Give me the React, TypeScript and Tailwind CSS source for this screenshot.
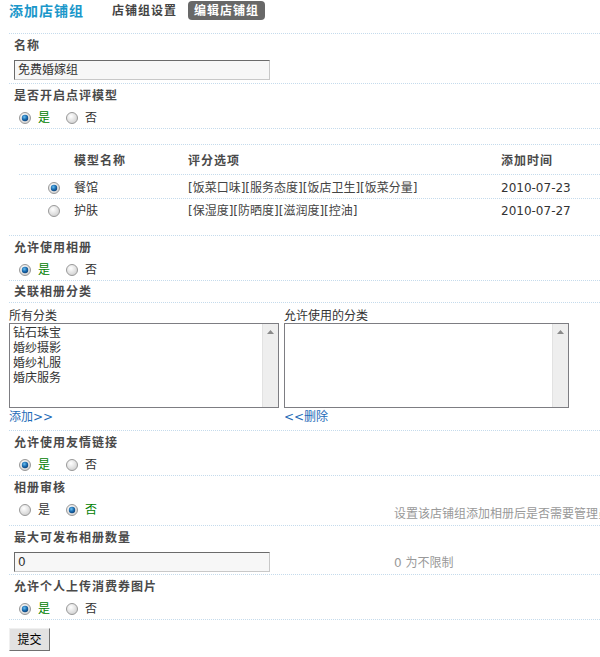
import React from "react";

const Radio = ({ checked }: { checked: boolean }) => (
  <svg width="12" height="12" viewBox="0 0 12 12" className="shrink-0 block">
    <defs>
      <radialGradient id="rg" cx="40%" cy="35%" r="70%">
        <stop offset="0%" stopColor="#ffffff" />
        <stop offset="100%" stopColor="#cfcfcf" />
      </radialGradient>
      <radialGradient id="rb" cx="40%" cy="35%" r="70%">
        <stop offset="0%" stopColor="#6cc0f0" />
        <stop offset="55%" stopColor="#1a6cb0" />
        <stop offset="100%" stopColor="#0d3f75" />
      </radialGradient>
    </defs>
    <circle cx="6" cy="6" r="5.5" fill="url(#rg)" stroke="#999999" strokeWidth="1" />
    {checked && <circle cx="6" cy="6" r="3.2" fill="url(#rb)" />}
  </svg>
);

const YesNo = ({ yes }: { yes: boolean }) => (
  <div className="flex items-center pl-[10px]">
    <Radio checked={yes} />
    <span className={"ml-[7px] " + (yes ? "text-[#008000]" : "text-[#333]")}>是</span>
    <span className="ml-[16px]">
      <Radio checked={!yes} />
    </span>
    <span className={"ml-[7px] " + (!yes ? "text-[#008000]" : "text-[#333]")}>否</span>
  </div>
);

const Label = ({ children, h = "h-[23px]" }: { children: React.ReactNode; h?: string }) => (
  <div className={h + " flex items-center pl-[5px] font-bold tracking-[1px] text-[#4a4a4a]"}>{children}</div>
);

const Section = ({ children, className = "" }: { children: React.ReactNode; className?: string }) => (
  <div className={"border-t border-dotted border-[#c5dbec] " + className}>{children}</div>
);

const TextInput = ({ value }: { value: string }) => (
  <div className="w-[256px] h-[20px] bg-[#f7f7f7] border border-t-[#6b6b6b] border-l-[#6b6b6b] border-r-[#c8c8c8] border-b-[#c8c8c8] flex items-center pl-[3px] text-[#333]">
    {value}
  </div>
);

const ListBox = ({ items, w }: { items: string[]; w: string }) => (
  <div className={w + " h-[85px] border border-[#7d7d82] bg-white flex"}>
    <div className="flex-1 pt-[2px] pl-[3px] leading-[15px] text-[#333]">
      {items.map((it) => (
        <div key={it}>{it}</div>
      ))}
    </div>
    <div className="w-[16px] h-full bg-[#eeeeee] border-l border-[#e2e2e2] flex justify-center pt-[6px]">
      <svg width="7" height="4" viewBox="0 0 7 4">
        <polygon points="3.5,0 7,4 0,4" fill="#8a8a8a" />
      </svg>
    </div>
  </div>
);

export default function App() {
  return (
    <div className="w-[600px] h-[657px] overflow-hidden bg-white font-['DejaVu_Sans','Noto_Sans_CJK_SC',sans-serif] text-[12px] leading-[16px] text-[#333]">
      <div className="pl-[9px] w-[760px]">
        {/* header */}
        <div className="h-[33px]">
          <div className="h-[22px] flex items-center">
            <span className="text-[14px] font-bold tracking-[1px] text-[#1b97ca]">添加店铺组</span>
            <span className="ml-[28px] font-bold tracking-[1px] text-[#444]">店铺组设置</span>
            <span className="ml-[11px] h-[19px] mt-[-1px] px-[6px] rounded-[4px] bg-[#686868] text-white font-bold tracking-[1px] flex items-center">
              编辑店铺组
            </span>
          </div>
        </div>

        {/* 名称 */}
        <Section className="pb-[3px]">
          <Label>名称</Label>
          <div className="mt-[3px] pl-[5px]">
            <TextInput value="免费婚嫁组" />
          </div>
        </Section>

        {/* 是否开启点评模型 */}
        <Section>
          <Label>是否开启点评模型</Label>
          <div className="h-[21px] flex items-center">
            <YesNo yes={true} />
          </div>
        </Section>

        {/* table */}
        <Section className="pt-[15px] pb-[12px]">
          <div className="ml-[10px] border-t border-dotted border-[#c5dbec]">
            <div className="h-[29px] pt-[3px] grid grid-cols-[55px_114px_313px_1fr] items-center font-bold tracking-[1px] text-[#4a4a4a]">
              <div />
              <div>模型名称</div>
              <div>评分选项</div>
              <div>添加时间</div>
            </div>
            <div className="h-[24px] pt-[2px] border-t border-dotted border-[#c5dbec] grid grid-cols-[55px_114px_313px_1fr] items-center">
              <div className="pl-[29px]">
                <Radio checked={true} />
              </div>
              <div>餐馆</div>
              <div className="text-[#444]">[饭菜口味][服务态度][饭店卫生][饭菜分量]</div>
              <div>2010-07-23</div>
            </div>
            <div className="h-[25px] border-t border-dotted border-[#c5dbec] grid grid-cols-[55px_114px_313px_1fr] items-center">
              <div className="pl-[29px]">
                <Radio checked={false} />
              </div>
              <div>护肤</div>
              <div className="text-[#444]">[保湿度][防晒度][滋润度][控油]</div>
              <div>2010-07-27</div>
            </div>
          </div>
        </Section>

        {/* 允许使用相册 */}
        <Section>
          <Label>允许使用相册</Label>
          <div className="h-[21px] flex items-center">
            <YesNo yes={true} />
          </div>
        </Section>

        {/* 关联相册分类 */}
        <Section>
          <Label h="h-[21px]">关联相册分类</Label>
        </Section>

        {/* album lists */}
        <Section className="pb-[5px]">
          <div className="flex gap-[5px]">
            <div className="flex flex-col">
              <div className="h-[20px] pt-[5px] flex items-center">所有分类</div>
              <ListBox w="w-[270px]" items={["钻石珠宝", "婚纱摄影", "婚纱礼服", "婚庆服务"]} />
              <div className="h-[17px] flex items-center text-[#1e6bb8]">添加&gt;&gt;</div>
            </div>
            <div className="flex flex-col">
              <div className="h-[20px] pt-[5px] flex items-center">允许使用的分类</div>
              <ListBox w="w-[285px]" items={[]} />
              <div className="h-[17px] flex items-center text-[#1e6bb8]">&lt;&lt;删除</div>
            </div>
          </div>
        </Section>

        {/* 友情链接 */}
        <Section>
          <Label>允许使用友情链接</Label>
          <div className="h-[21px] flex items-center">
            <YesNo yes={true} />
          </div>
        </Section>

        {/* 相册审核 */}
        <Section>
          <Label>相册审核</Label>
          <div className="h-[26px] flex">
            <div className="w-[385px] h-[22px] flex items-center">
              <YesNo yes={false} />
            </div>
            <div className="self-end mb-[3px] text-[#999] whitespace-nowrap">设置该店铺组添加相册后是否需要管理员审核</div>
          </div>
        </Section>

        {/* 最大可发布相册数量 */}
        <Section className="pb-[2px]">
          <Label>最大可发布相册数量</Label>
          <div className="mt-[3px] flex items-center">
            <div className="w-[385px] pl-[5px]">
              <TextInput value="0" />
            </div>
            <div className="text-[#999] mt-[2px]">0 为不限制</div>
          </div>
        </Section>

        {/* 消费券 */}
        <Section>
          <Label>允许个人上传消费券图片</Label>
          <div className="h-[21px] flex items-center">
            <YesNo yes={true} />
          </div>
        </Section>

        {/* submit */}
        <Section className="pt-[8px]">
          <button className="w-[41px] h-[23px] bg-[#e2e2e2] border border-t-[#f0f0f0] border-l-[#f0f0f0] border-r-[#707070] border-b-[#707070] text-black flex items-center justify-center">
            提交
          </button>
        </Section>
      </div>
    </div>
  );
}
